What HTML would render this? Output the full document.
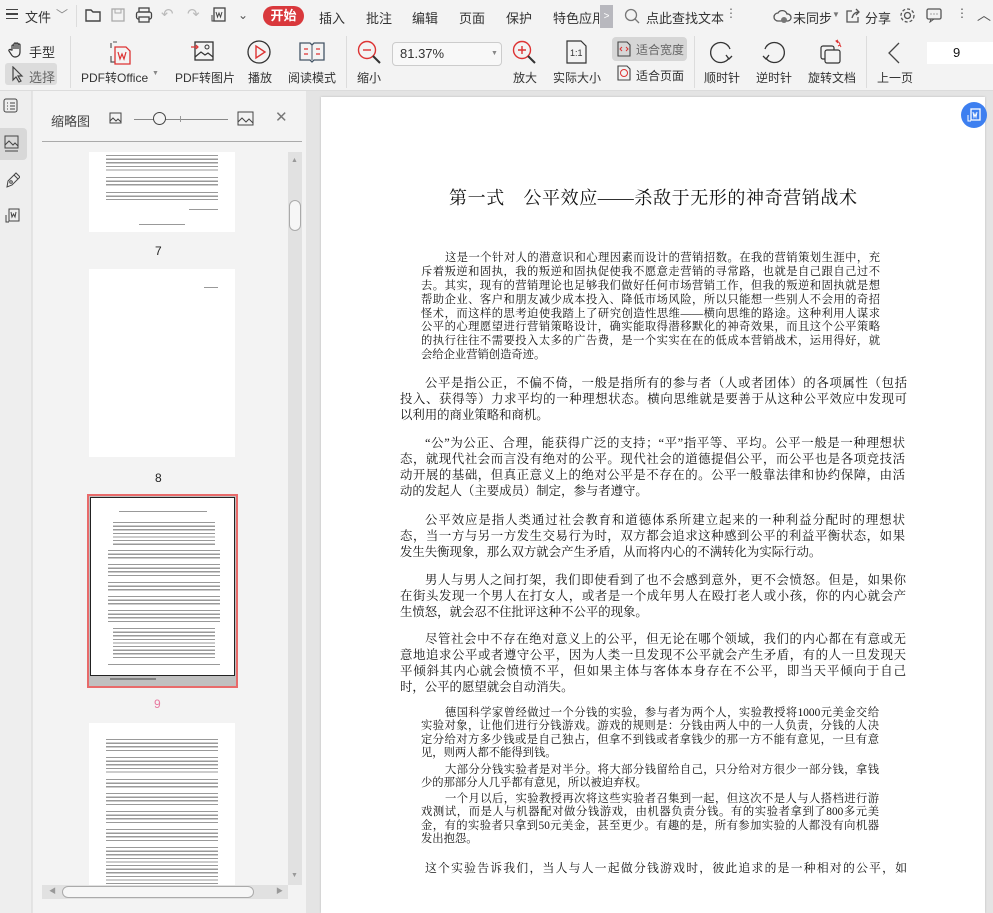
<!DOCTYPE html>
<html><head><meta charset="utf-8">
<style>
*{margin:0;padding:0;box-sizing:border-box}
body{width:993px;height:913px;overflow:hidden;background:#e4e4e4;font-family:"Liberation Sans","Noto Sans CJK SC",sans-serif;font-size:12px;color:#333;position:relative}
.a{position:absolute;white-space:nowrap}
.tb{position:absolute;left:0;top:0;width:993px;height:91px;background:#f3f3f3;border-bottom:1px solid #dcdcdc}
.ic{position:absolute}
.lbl{position:absolute;font-size:12px;color:#333;white-space:nowrap}
.sep{position:absolute;width:1px;background:#dcdcdc}
.pg{position:absolute;left:321px;top:97px;width:664px;height:816px;background:#fff;box-shadow:0 0 2px #bbb}
.s{position:absolute;font-family:"Liberation Serif","Noto Serif CJK SC",serif;color:#111;white-space:nowrap;text-align-last:justify;text-align:justify}
.thumb{position:absolute;background:#fff}
.tx{position:absolute;background:repeating-linear-gradient(#777 0 1.2px,transparent 1.2px 3.6px);opacity:.75}
</style></head><body>
<div class="tb"></div>
<!-- row 1 -->
<div class="a" style="left:6px;top:9px;width:12px;height:10px;border-top:1.5px solid #444;border-bottom:1.5px solid #444"></div>
<div class="a" style="left:6px;top:13px;width:12px;height:1.5px;background:#444"></div>
<div class="lbl" style="left:25px;top:7px;font-size:13px">文件</div>
<div class="lbl" style="left:56px;top:6px;color:#888">﹀</div>
<div class="sep" style="left:76px;top:5px;height:22px"></div>
<svg class="ic" style="left:84px;top:7px" width="18" height="16"><path d="M2 3h5l2 2h7v9H2z" fill="none" stroke="#444" stroke-width="1.4"/></svg>
<svg class="ic" style="left:110px;top:7px" width="16" height="16"><rect x="2" y="2" width="12" height="12" fill="none" stroke="#aaa" stroke-width="1.3"/><rect x="5" y="2" width="6" height="4" fill="none" stroke="#aaa"/></svg>
<svg class="ic" style="left:135px;top:7px" width="18" height="16"><rect x="4" y="1" width="10" height="4" fill="none" stroke="#444" stroke-width="1.3"/><rect x="1.5" y="5" width="15" height="7" rx="2" fill="none" stroke="#444" stroke-width="1.3"/><rect x="4" y="10" width="10" height="5" fill="#f3f3f3" stroke="#444" stroke-width="1.3"/></svg>
<div class="lbl" style="left:161px;top:5px;font-size:15px;color:#bbb">↶</div>
<div class="lbl" style="left:187px;top:5px;font-size:15px;color:#bbb">↷</div>
<svg class="ic" style="left:209px;top:6px" width="18" height="18"><rect x="5" y="2" width="11" height="13" fill="none" stroke="#444" stroke-width="1.3"/><path d="M7 6l1.5 5 1.5-4 1.5 4 1.5-5" fill="none" stroke="#444"/><path d="M3 9v6h3" fill="none" stroke="#444"/></svg>
<div class="lbl" style="left:238px;top:8px;color:#555">⌄</div>
<div class="a" style="left:263px;top:6px;width:41px;height:20px;border-radius:10px;background:#d9383c;color:#fff;font-size:13px;text-align:center;line-height:20px;font-weight:bold">开始</div>
<div class="lbl" style="left:319px;top:8px;font-size:13px">插入</div>
<div class="lbl" style="left:366px;top:8px;font-size:13px">批注</div>
<div class="lbl" style="left:412px;top:8px;font-size:13px">编辑</div>
<div class="lbl" style="left:459px;top:8px;font-size:13px">页面</div>
<div class="lbl" style="left:506px;top:8px;font-size:13px">保护</div>
<div class="lbl" style="left:553px;top:8px;font-size:13px;width:46px;overflow:hidden">特色应用</div>
<div class="a" style="left:600px;top:5px;width:13px;height:23px;background:#b8b8be;color:#fff;font-size:10px;text-align:center;line-height:23px">&gt;</div>
<svg class="ic" style="left:624px;top:8px" width="16" height="16"><circle cx="7" cy="7" r="5.5" fill="none" stroke="#777" stroke-width="1.3"/><path d="M11 11l4 4" stroke="#777" stroke-width="1.3"/></svg>
<div class="lbl" style="left:646px;top:8px;font-size:13px">点此查找文本</div>
<div class="lbl" style="left:725px;top:6px;color:#666">⋮</div>
<svg class="ic" style="left:773px;top:8px" width="20" height="16"><path d="M5 13a4 4 0 0 1 0-8 5 5 0 0 1 9 1 3.5 3.5 0 0 1 1 7z" fill="none" stroke="#555" stroke-width="1.3"/><circle cx="11" cy="12" r="3" fill="#777"/></svg>
<div class="lbl" style="left:793px;top:8px;font-size:13px">未同步</div>
<div class="lbl" style="left:832px;top:10px;font-size:8px;color:#777">▼</div>
<svg class="ic" style="left:845px;top:8px" width="16" height="16"><path d="M7 3H2v11h11V9" fill="none" stroke="#555" stroke-width="1.3"/><path d="M7 10c1-4 3-6 7-6M11 1l3 3-3 3" fill="none" stroke="#555" stroke-width="1.3"/></svg>
<div class="lbl" style="left:865px;top:8px;font-size:13px">分享</div>
<svg class="ic" style="left:899px;top:7px" width="17" height="17"><circle cx="8.5" cy="8.5" r="3" fill="none" stroke="#555" stroke-width="1.3"/><circle cx="8.5" cy="8.5" r="6.5" fill="none" stroke="#555" stroke-width="1.3" stroke-dasharray="3 2"/></svg>
<svg class="ic" style="left:926px;top:8px" width="16" height="15"><rect x="1" y="1" width="14" height="10" rx="1.5" fill="none" stroke="#555" stroke-width="1.3"/><path d="M5 11l-1 3 4-3" fill="none" stroke="#555"/><path d="M4.5 6h1M7.5 6h1M10.5 6h1" stroke="#555"/></svg>
<div class="lbl" style="left:956px;top:6px;color:#555">⋮</div>
<div class="lbl" style="left:977px;top:5px;color:#555;font-size:14px">︿</div>
<!-- row 2 -->
<svg class="ic" style="left:8px;top:41px" width="17" height="17"><path d="M4 9V5a1 1 0 0 1 2 0v3V3a1 1 0 0 1 2 0v5V3a1 1 0 0 1 2 0v5V4a1 1 0 0 1 2 0v7c0 3-2 5-5 5-2 0-3-1-4-3l-2-3a1 1 0 0 1 2-1z" fill="none" stroke="#333" stroke-width="1.2"/></svg>
<div class="lbl" style="left:29px;top:42px;font-size:13px">手型</div>
<div class="a" style="left:5px;top:63px;width:52px;height:22px;background:#dcdcdc;border-radius:3px"></div>
<svg class="ic" style="left:11px;top:66px" width="14" height="17"><path d="M2 1v13l3-3 3 5 2-1-3-5h4z" fill="none" stroke="#444" stroke-width="1.2"/></svg>
<div class="lbl" style="left:29px;top:67px;font-size:13px;color:#666">选择</div>
<div class="sep" style="left:70px;top:36px;height:52px"></div>
<svg class="ic" style="left:105px;top:40px" width="28" height="26"><path d="M8 2h4" stroke="#555"/><path d="M6 3v5M6 16v6h4" fill="none" stroke="#555" stroke-width="1.2"/><path d="M10 7h11l4 4v13H10z" fill="none" stroke="#d33" stroke-width="1.3"/><path d="M13 12l2 7 2-5 2 5 2-7" fill="none" stroke="#d33" stroke-width="1.2"/></svg>
<div class="lbl" style="left:81px;top:69px;font-size:12px">PDF转Office</div>
<div class="lbl" style="left:152px;top:70px;font-size:7px;color:#888">▼</div>
<svg class="ic" style="left:191px;top:40px" width="24" height="22"><rect x="4" y="2" width="18" height="18" fill="none" stroke="#333" stroke-width="1.3"/><path d="M4 17l6-5 4 3 3-2 5 4" fill="none" stroke="#333" stroke-width="1.2"/><circle cx="16" cy="7" r="2" fill="none" stroke="#333"/><path d="M0 7h7M5 5l2 2-2 2" fill="none" stroke="#d33" stroke-width="1.2"/></svg>
<div class="lbl" style="left:175px;top:69px">PDF转图片</div>
<svg class="ic" style="left:247px;top:40px" width="24" height="24"><circle cx="12" cy="12" r="11" fill="none" stroke="#333" stroke-width="1.3"/><path d="M9 6v12l9-6z" fill="none" stroke="#d33" stroke-width="1.4"/></svg>
<div class="lbl" style="left:248px;top:69px">播放</div>
<svg class="ic" style="left:299px;top:41px" width="26" height="22"><path d="M1 2h10l2 2 2-2h10v17H15l-2 2-2-2H1z" fill="none" stroke="#456" stroke-width="1.3"/><path d="M13 4v15" stroke="#456"/><path d="M5 8h4M5 13h4M17 8h4M17 13h4" stroke="#d33" stroke-width="1.3"/></svg>
<div class="lbl" style="left:288px;top:69px">阅读模式</div>
<div class="sep" style="left:346px;top:36px;height:52px"></div>
<svg class="ic" style="left:357px;top:40px" width="25" height="25"><circle cx="10" cy="10" r="8.5" fill="none" stroke="#d33" stroke-width="1.4"/><path d="M6 10h8" stroke="#d33" stroke-width="1.4"/><path d="M16 16l7 7" stroke="#333" stroke-width="2"/></svg>
<div class="lbl" style="left:357px;top:69px">缩小</div>
<div class="a" style="left:392px;top:42px;width:110px;height:24px;background:#f8f8f8;border:1px solid #ccc;border-radius:4px;font-size:13px;padding:3px 0 0 7px;color:#333">81.37%</div>
<div class="lbl" style="left:491px;top:50px;font-size:7px;color:#888">▼</div>
<svg class="ic" style="left:512px;top:40px" width="25" height="25"><circle cx="10" cy="10" r="8.5" fill="none" stroke="#d33" stroke-width="1.4"/><path d="M6 10h8M10 6v8" stroke="#d33" stroke-width="1.4"/><path d="M16 16l7 7" stroke="#333" stroke-width="2"/></svg>
<div class="lbl" style="left:513px;top:69px">放大</div>
<svg class="ic" style="left:566px;top:40px" width="22" height="24"><path d="M1 1h14l5 5v17H1z" fill="none" stroke="#333" stroke-width="1.2"/><text x="4" y="16" font-size="9" fill="#333" font-family="Liberation Sans">1:1</text></svg>
<div class="lbl" style="left:553px;top:69px">实际大小</div>
<div class="a" style="left:612px;top:37px;width:75px;height:24px;background:#d6d6d6;border-radius:4px"></div>
<svg class="ic" style="left:617px;top:41px" width="14" height="16"><path d="M1 1h9l3 3v11H1z" fill="none" stroke="#444" stroke-width="1.1"/><path d="M5 6l-2 2 2 2M9 6l2 2-2 2" fill="none" stroke="#d33"/></svg>
<div class="lbl" style="left:636px;top:41px;color:#666">适合宽度</div>
<svg class="ic" style="left:617px;top:65px" width="14" height="16"><path d="M1 1h9l3 3v11H1z" fill="none" stroke="#444" stroke-width="1.1"/><circle cx="7" cy="8" r="3.5" fill="none" stroke="#d33"/></svg>
<div class="lbl" style="left:636px;top:67px">适合页面</div>
<div class="sep" style="left:694px;top:36px;height:52px"></div>
<svg class="ic" style="left:709px;top:40px" width="25" height="24"><path d="M20 18A10 10 0 1 1 21 9" fill="none" stroke="#333" stroke-width="1.3"/><path d="M17 15l3 4 3-3" fill="none" stroke="#333" stroke-width="1.3"/></svg>
<div class="lbl" style="left:704px;top:69px">顺时针</div>
<svg class="ic" style="left:761px;top:40px" width="25" height="24"><path d="M5 18A10 10 0 1 0 4 9" fill="none" stroke="#333" stroke-width="1.3"/><path d="M8 15l-3 4-3-3" fill="none" stroke="#333" stroke-width="1.3"/></svg>
<div class="lbl" style="left:756px;top:69px">逆时针</div>
<svg class="ic" style="left:819px;top:39px" width="26" height="26"><rect x="2" y="7" width="13" height="13" rx="2" fill="none" stroke="#333" stroke-width="1.2"/><rect x="6" y="11" width="15" height="13" rx="2" fill="#f3f3f3" stroke="#333" stroke-width="1.2"/><path d="M17 2a4 4 0 0 1 4 4M19 1l-2 1 2 2M22 8l-1-2-2 1" fill="none" stroke="#d33"/></svg>
<div class="lbl" style="left:808px;top:69px">旋转文档</div>
<div class="sep" style="left:866px;top:36px;height:52px"></div>
<svg class="ic" style="left:887px;top:42px" width="14" height="22"><path d="M12 1L2 11l10 10" fill="none" stroke="#444" stroke-width="1.3"/></svg>
<div class="lbl" style="left:877px;top:69px">上一页</div>
<div class="a" style="left:927px;top:42px;width:66px;height:22px;background:#fff"></div>
<div class="lbl" style="left:953px;top:45px;font-size:13px;color:#111">9</div>
<!-- left icon bar -->
<div class="a" style="left:0;top:91px;width:32px;height:822px;background:#eeeeee;border-right:1px solid #e2e2e2"></div>
<svg class="ic" style="left:3px;top:98px" width="16" height="16"><rect x="1" y="1" width="13" height="13" rx="2" fill="none" stroke="#444"/><path d="M4 5h1M7 5h5M4 8h1M7 8h5M4 11h1M7 11h5" stroke="#444"/></svg>
<div class="a" style="left:0;top:128px;width:27px;height:32px;background:#d8d8d8;border-radius:0 4px 4px 0"></div>
<svg class="ic" style="left:4px;top:135px" width="16" height="18"><rect x="1" y="1" width="13" height="12" fill="none" stroke="#444"/><path d="M1 10l4-4 4 4 2-2 3 3M1 16h13" fill="none" stroke="#444"/></svg>
<svg class="ic" style="left:4px;top:171px" width="16" height="18"><path d="M3 16l1-6 6-6 4 4-6 6z M10 4l2-2 4 4-2 2" fill="none" stroke="#444"/><circle cx="7" cy="11" r="1.3" fill="none" stroke="#444"/></svg>
<svg class="ic" style="left:4px;top:207px" width="16" height="18"><rect x="5" y="2" width="10" height="12" fill="none" stroke="#444"/><path d="M7 5l1 5 1.5-3 1.5 3 1-5M2 8v7h3" fill="none" stroke="#444"/></svg>
<!-- thumbnail panel -->
<div class="a" style="left:33px;top:91px;width:273px;height:822px;background:#f3f3f3"></div>
<div class="lbl" style="left:51px;top:111px;font-size:13px;color:#444">缩略图</div>
<svg class="ic" style="left:109px;top:112px" width="14" height="13"><rect x="1" y="1" width="11" height="10" fill="none" stroke="#444"/><path d="M1 9l3-3 3 3 2-2 3 3" fill="none" stroke="#444"/></svg>
<div class="a" style="left:134px;top:119px;width:94px;height:1px;background:#888"></div>
<div class="a" style="left:153px;top:112px;width:13px;height:13px;border-radius:50%;border:1.3px solid #444;background:#f3f3f3"></div>
<div class="a" style="left:180px;top:116px;width:1px;height:6px;background:#999"></div>
<svg class="ic" style="left:237px;top:111px" width="18" height="16"><rect x="1" y="1" width="15" height="13" fill="none" stroke="#444"/><path d="M1 11l4-4 4 4 3-3 4 4" fill="none" stroke="#444"/></svg>
<div class="lbl" style="left:275px;top:108px;font-size:15px;color:#777">✕</div>
<div class="a" style="left:42px;top:141px;width:260px;height:1px;background:#aaa"></div>
<!-- scrollbars -->
<div class="a" style="left:288px;top:152px;width:14px;height:733px;background:#e1e1e1"></div>
<div class="a" style="left:289px;top:200px;width:12px;height:31px;border:1px solid #aaa;border-radius:6px;background:#f6f6f6"></div>
<div class="lbl" style="left:291px;top:157px;font-size:7px;color:#999">▲</div>
<div class="lbl" style="left:291px;top:872px;font-size:7px;color:#999">▼</div>
<div class="a" style="left:42px;top:885px;width:246px;height:14px;background:#e1e1e1"></div>
<div class="a" style="left:62px;top:886px;width:192px;height:12px;border:1px solid #aaa;border-radius:6px;background:#f6f6f6"></div>
<div class="lbl" style="left:49px;top:886px;font-size:7px;color:#999">◀</div>
<div class="lbl" style="left:276px;top:886px;font-size:7px;color:#999">▶</div>
<!-- thumbs -->
<div class="thumb" style="left:89px;top:152px;width:146px;height:80px"><div class="tx" style="left:17px;top:3px;width:112px;height:16px"></div><div class="tx" style="left:17px;top:25px;width:112px;height:10px"></div><div class="tx" style="left:17px;top:40px;width:112px;height:8px"></div><div class="tx" style="left:100px;top:57px;width:29px;height:2px"></div><div class="tx" style="left:50px;top:72px;width:46px;height:2px"></div></div>
<div class="lbl" style="left:155px;top:244px;font-size:12px;color:#222">7</div>
<div class="thumb" style="left:89px;top:269px;width:146px;height:188px"><div class="tx" style="left:115px;top:18px;width:14px;height:2px"></div></div>
<div class="lbl" style="left:155px;top:471px;font-size:12px;color:#222">8</div>
<div class="a" style="left:87px;top:494px;width:151px;height:194px;border:2px solid #e86a6a;background:#c0c0c0"></div>
<div class="thumb" style="left:90px;top:497px;width:145px;height:179px;border:1px solid #222"><div class="tx" style="left:28px;top:13px;width:88px;height:2px"></div><div class="tx" style="left:22px;top:24px;width:102px;height:24px"></div><div class="tx" style="left:17px;top:52px;width:112px;height:10px"></div><div class="tx" style="left:17px;top:66px;width:112px;height:14px"></div><div class="tx" style="left:17px;top:84px;width:112px;height:10px"></div><div class="tx" style="left:17px;top:98px;width:112px;height:10px"></div><div class="tx" style="left:17px;top:112px;width:112px;height:14px"></div><div class="tx" style="left:22px;top:130px;width:102px;height:32px"></div><div class="tx" style="left:17px;top:166px;width:112px;height:2px"></div></div>
<div class="a" style="left:110px;top:678px;width:46px;height:2px;background:#555;opacity:.6"></div>
<div class="lbl" style="left:154px;top:697px;font-size:12px;color:#e879a0">9</div>
<div class="thumb" style="left:89px;top:723px;width:146px;height:162px"><div class="tx" style="left:17px;top:16px;width:112px;height:14px"></div><div class="tx" style="left:17px;top:34px;width:112px;height:18px"></div><div class="tx" style="left:17px;top:56px;width:112px;height:10px"></div><div class="tx" style="left:17px;top:70px;width:112px;height:14px"></div><div class="tx" style="left:17px;top:88px;width:112px;height:14px"></div><div class="tx" style="left:17px;top:106px;width:112px;height:14px"></div><div class="tx" style="left:17px;top:124px;width:112px;height:38px"></div></div>
<!-- gap -->
<div class="a" style="left:306px;top:91px;width:15px;height:822px;background:#e4e4e4"></div>
<!-- page -->
<div class="pg"></div>
<div class="a" style="left:961px;top:102px;width:26px;height:26px;border-radius:50%;background:#3d7ff0"></div>
<svg class="ic" style="left:966px;top:107px" width="16" height="16"><rect x="5" y="2" width="9" height="11" fill="none" stroke="#fff" stroke-width="1.3"/><path d="M7 5l1 5 1-3 1 3 1-5M2 8v6h3" fill="none" stroke="#fff"/></svg>
<div class="s" style="left:449px;top:184px;width:408px;font-size:18px">第一式　公平效应——杀敌于无形的神奇营销战术</div>
<div style="font-size:11.3px">
<div class="s" style="left:445px;top:249px;width:435px">这是一个针对人的潜意识和心理因素而设计的营销招数。在我的营销策划生涯中，充</div>
<div class="s" style="left:421px;top:263px;width:459px">斥着叛逆和固执，我的叛逆和固执促使我不愿意走营销的寻常路，也就是自己跟自己过不</div>
<div class="s" style="left:421px;top:277px;width:459px">去。其实，现有的营销理论也足够我们做好任何市场营销工作，但我的叛逆和固执就是想</div>
<div class="s" style="left:421px;top:291px;width:459px">帮助企业、客户和朋友减少成本投入、降低市场风险，所以只能想一些别人不会用的奇招</div>
<div class="s" style="left:421px;top:305px;width:459px">怪术，而这样的思考迫使我踏上了研究创造性思维——横向思维的路途。这种利用人谋求</div>
<div class="s" style="left:421px;top:318px;width:459px">公平的心理愿望进行营销策略设计，确实能取得潜移默化的神奇效果，而且这个公平策略</div>
<div class="s" style="left:421px;top:332px;width:459px">的执行往往不需要投入太多的广告费，是一个实实在在的低成本营销战术，运用得好，就</div>
<div class="s" style="left:421px;top:346px;text-align-last:auto">会给企业营销创造奇迹。</div>
</div>
<div style="font-size:12.4px">
<div class="s" style="left:425px;top:373px;width:482px">公平是指公正，不偏不倚，一般是指所有的参与者（人或者团体）的各项属性（包括</div>
<div class="s" style="left:400px;top:389px;width:507px">投入、获得等）力求平均的一种理想状态。横向思维就是要善于从这种公平效应中发现可</div>
<div class="s" style="left:400px;top:405px;text-align-last:auto">以利用的商业策略和商机。</div>
<div class="s" style="left:425px;top:433px;width:480px">“公”为公正、合理，能获得广泛的支持；“平”指平等、平均。公平一般是一种理想状</div>
<div class="s" style="left:400px;top:449px;width:505px">态，就现代社会而言没有绝对的公平。现代社会的道德提倡公平，而公平也是各项竞技活</div>
<div class="s" style="left:400px;top:465px;width:505px">动开展的基础，但真正意义上的绝对公平是不存在的。公平一般靠法律和协约保障，由活</div>
<div class="s" style="left:400px;top:481px;text-align-last:auto">动的发起人（主要成员）制定，参与者遵守。</div>
<div class="s" style="left:425px;top:510px;width:480px">公平效应是指人类通过社会教育和道德体系所建立起来的一种利益分配时的理想状</div>
<div class="s" style="left:400px;top:526px;width:505px">态，当一方与另一方发生交易行为时，双方都会追求这种感到公平的利益平衡状态，如果</div>
<div class="s" style="left:400px;top:542px;text-align-last:auto">发生失衡现象，那么双方就会产生矛盾，从而将内心的不满转化为实际行动。</div>
<div class="s" style="left:425px;top:570px;width:481px">男人与男人之间打架，我们即使看到了也不会感到意外，更不会愤怒。但是，如果你</div>
<div class="s" style="left:400px;top:586px;width:506px">在街头发现一个男人在打女人，或者是一个成年男人在殴打老人或小孩，你的内心就会产</div>
<div class="s" style="left:400px;top:602px;text-align-last:auto">生愤怒，就会忍不住批评这种不公平的现象。</div>
<div class="s" style="left:425px;top:629px;width:481px">尽管社会中不存在绝对意义上的公平，但无论在哪个领域，我们的内心都在有意或无</div>
<div class="s" style="left:400px;top:645px;width:506px">意地追求公平或者遵守公平，因为人类一旦发现不公平就会产生矛盾，有的人一旦发现天</div>
<div class="s" style="left:400px;top:661px;width:506px">平倾斜其内心就会愤愤不平，但如果主体与客体本身存在不公平，即当天平倾向于自己</div>
<div class="s" style="left:400px;top:677px;text-align-last:auto">时，公平的愿望就会自动消失。</div>
</div>
<div style="font-size:11.3px">
<div class="s" style="left:445px;top:704px;width:434px">德国科学家曾经做过一个分钱的实验，参与者为两个人，实验教授将1000元美金交给</div>
<div class="s" style="left:421px;top:717px;width:458px">实验对象，让他们进行分钱游戏。游戏的规则是：分钱由两人中的一人负责，分钱的人决</div>
<div class="s" style="left:421px;top:731px;width:458px">定分给对方多少钱或是自己独占，但拿不到钱或者拿钱少的那一方不能有意见，一旦有意</div>
<div class="s" style="left:421px;top:744px;text-align-last:auto">见，则两人都不能得到钱。</div>
<div class="s" style="left:445px;top:761px;width:434px">大部分分钱实验者是对半分。将大部分钱留给自己，只分给对方很少一部分钱，拿钱</div>
<div class="s" style="left:421px;top:774px;text-align-last:auto">少的那部分人几乎都有意见，所以被迫弃权。</div>
<div class="s" style="left:445px;top:790px;width:434px">一个月以后，实验教授再次将这些实验者召集到一起，但这次不是人与人搭档进行游</div>
<div class="s" style="left:421px;top:803px;width:458px">戏测试，而是人与机器配对做分钱游戏，由机器负责分钱。有的实验者拿到了800多元美</div>
<div class="s" style="left:421px;top:817px;width:458px">金，有的实验者只拿到50元美金，甚至更少。有趣的是，所有参加实验的人都没有向机器</div>
<div class="s" style="left:421px;top:830px;text-align-last:auto">发出抱怨。</div>
</div>
<div class="s" style="left:425px;top:859px;width:482px;font-size:11.8px">这个实验告诉我们，当人与人一起做分钱游戏时，彼此追求的是一种相对的公平，如</div>
</body></html>
